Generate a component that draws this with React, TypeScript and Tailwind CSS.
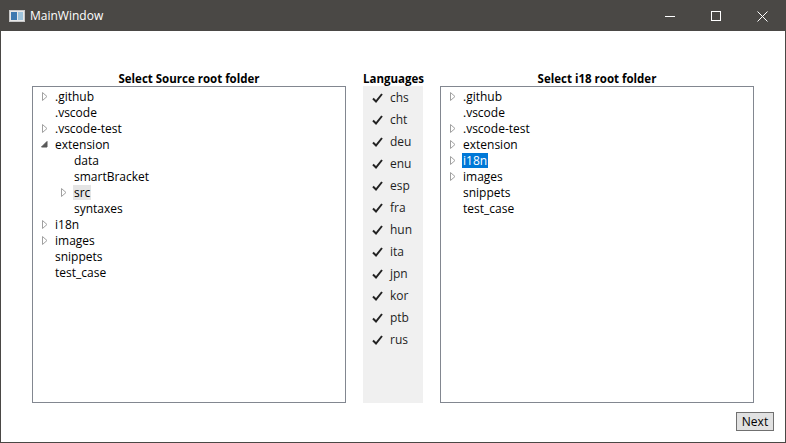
import React from "react";

type Node = { label: string; depth: number; arrow?: "closed" | "open"; hover?: boolean; selected?: boolean };

const sourceTree: Node[] = [
  { label: ".github", depth: 0, arrow: "closed" },
  { label: ".vscode", depth: 0 },
  { label: ".vscode-test", depth: 0, arrow: "closed" },
  { label: "extension", depth: 0, arrow: "open" },
  { label: "data", depth: 1 },
  { label: "smartBracket", depth: 1 },
  { label: "src", depth: 1, arrow: "closed", hover: true },
  { label: "syntaxes", depth: 1 },
  { label: "i18n", depth: 0, arrow: "closed" },
  { label: "images", depth: 0, arrow: "closed" },
  { label: "snippets", depth: 0 },
  { label: "test_case", depth: 0 },
];

const i18Tree: Node[] = [
  { label: ".github", depth: 0, arrow: "closed" },
  { label: ".vscode", depth: 0 },
  { label: ".vscode-test", depth: 0, arrow: "closed" },
  { label: "extension", depth: 0, arrow: "closed" },
  { label: "i18n", depth: 0, arrow: "closed", selected: true },
  { label: "images", depth: 0, arrow: "closed" },
  { label: "snippets", depth: 0 },
  { label: "test_case", depth: 0 },
];

const languages = ["chs", "cht", "deu", "enu", "esp", "fra", "hun", "ita", "jpn", "kor", "ptb", "rus"];

function Arrow({ kind }: { kind?: "closed" | "open" }) {
  if (!kind) return <span className="w-[19px] shrink-0" />;
  return (
    <span className="w-[19px] shrink-0 flex items-center justify-center">
      {kind === "closed" ? (
        <svg width="6" height="9" viewBox="0 0 6 9">
          <path d="M0.5 0.5 L5 4.5 L0.5 8.5 Z" fill="white" stroke="#a0a0a0" strokeWidth="1" />
        </svg>
      ) : (
        <svg width="7" height="7" viewBox="0 0 7 7">
          <path d="M6 0.5 L6 6 L0.5 6 Z" fill="#595959" stroke="#595959" strokeWidth="1" />
        </svg>
      )}
    </span>
  );
}

function TreeBox({ title, items }: { title: string; items: Node[] }) {
  return (
    <div className="w-[314px] flex flex-col">
      <div className="h-[15px] text-center font-bold text-[11.5px] leading-[15px] text-black">{title}</div>
      <div className="h-[317px] border border-[#828790] bg-white pt-[1px] pl-[2px]">
        {items.map((n, i) => (
          <div key={i} className="h-[16px] flex items-center" style={{ paddingLeft: n.depth * 19 }}>
            <Arrow kind={n.arrow} />
            <span
              className={
                "px-[1px] leading-[15px] " +
                (n.selected ? "bg-[#0078d7] text-white" : n.hover ? "bg-[#e5e5e5] text-black" : "text-black")
              }
            >
              {n.label}
            </span>
          </div>
        ))}
      </div>
    </div>
  );
}

export default function App() {
  return (
    <div className="w-[786px] h-[443px] flex flex-col border border-[#4a4845] bg-white font-['Segoe_UI','Open_Sans',sans-serif] text-[12px] overflow-hidden">
      {/* title bar */}
      <div className="h-[30px] shrink-0 bg-[#4a4845] flex items-center text-white">
        <div className="ml-[8px] w-[16px] h-[12px] bg-[#e8e8e8] border border-[#c8c8c8] flex items-center px-[1px]">
          <div className="w-[6px] h-[8px] bg-[#3d79b0]" />
          <div className="w-[6px] h-[8px] ml-[1px] bg-[#9ec4dc]" />
        </div>
        <span className="ml-[5px] text-[12px]">MainWindow</span>
        <div className="ml-auto flex items-center h-full">
          <div className="w-[46px] h-full flex items-center justify-center">
            <div className="w-[10px] h-px bg-white" />
          </div>
          <div className="w-[46px] h-full flex items-center justify-center">
            <div className="w-[10px] h-[10px] border border-white" />
          </div>
          <div className="w-[46px] h-full flex items-center justify-center">
            <svg width="11" height="11" viewBox="0 0 11 11">
              <path d="M0.5 0.5 L10.5 10.5 M10.5 0.5 L0.5 10.5" stroke="white" strokeWidth="1" />
            </svg>
          </div>
        </div>
      </div>

      {/* content */}
      <div className="flex-1 flex flex-col pl-[31px] pt-[40px]">
        <div className="flex gap-[17px]">
          <TreeBox title="Select Source root folder" items={sourceTree} />
          <div className="w-[60px] flex flex-col">
            <div className="h-[15px] text-center font-bold text-[11.5px] leading-[15px] text-black">Languages</div>
            <div className="h-[317px] bg-[#f0f0f0] pt-[1px]">
              {languages.map((l) => (
                <div key={l} className="h-[22px] flex items-center text-[#1e1e1e]">
                  <svg className="ml-[9px]" width="11" height="10" viewBox="0 0 11 10">
                    <path d="M1 5.5 L4 8.5 L10 1" fill="none" stroke="#222" strokeWidth="2" />
                  </svg>
                  <span className="ml-[7px]">{l}</span>
                </div>
              ))}
            </div>
          </div>
          <TreeBox title="Select i18 root folder" items={i18Tree} />
        </div>
        <div className="flex justify-end pr-[11px] mt-[9px]">
          <button className="w-[38px] h-[19px] bg-[#e1e1e1] border border-[#707070] text-[12px] leading-[15px] text-black">
            Next
          </button>
        </div>
      </div>
    </div>
  );
}
